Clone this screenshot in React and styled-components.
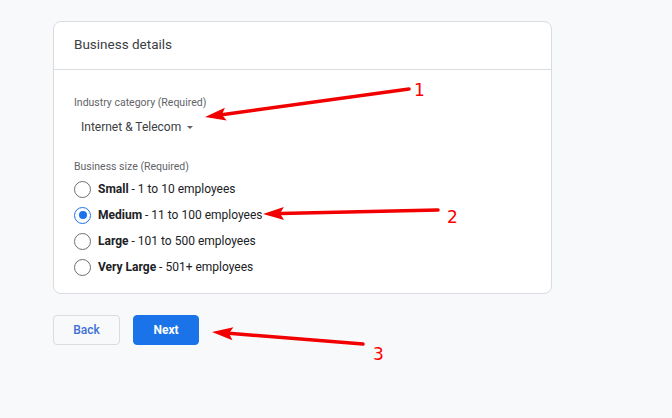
import React from 'react'
import styled, { createGlobalStyle } from 'styled-components'

const Global = createGlobalStyle`
  html, body {
    margin: 0;
    padding: 0;
    background: #f8f9fa;
    font-family: Roboto, "Liberation Sans", Arial, sans-serif;
    color: #202124;
  }
`

const Page = styled.div`
  position: relative;
  width: 672px;
  height: 418px;
  padding: 21px 0 0 53px;
  box-sizing: border-box;
`

const Card = styled.section`
  width: 499px;
  height: 273px;
  box-sizing: border-box;
  background: #fff;
  border: 1px solid #dadce0;
  border-radius: 8px;
`

const CardHeader = styled.header`
  height: 48px;
  box-sizing: border-box;
  display: flex;
  align-items: center;
  padding: 0 20px 4px;
  border-bottom: 1px solid #dadce0;
  font-size: 13.5px;
  color: #3c4043;
`

const CardBody = styled.div`
  padding: 26px 20px 0;
  display: flex;
  flex-direction: column;
`

const FieldLabel = styled.div`
  font-size: 10.5px;
  color: #5f6368;
  line-height: 14px;
  margin-top: ${(p) => p.$gap || 0}px;
`

const Select = styled.div`
  display: flex;
  align-items: center;
  gap: 6px;
  margin: 6px 0 0 7px;
  height: 22px;
  font-size: 12px;
  color: #3c4043;
`

const Caret = styled.span`
  width: 0;
  height: 0;
  border-left: 3.5px solid transparent;
  border-right: 3.5px solid transparent;
  border-top: 3.5px solid #5f6368;
  margin-top: 1px;
`

const RadioList = styled.div`
  display: flex;
  flex-direction: column;
  margin-top: 2px;
`

const Option = styled.label`
  display: flex;
  align-items: center;
  height: 26px;
  gap: 7px;
  font-size: 12px;
  color: #202124;
  b {
    font-weight: 700;
  }
`

const Circle = styled.span`
  width: 17px;
  height: 17px;
  box-sizing: border-box;
  border-radius: 50%;
  border: 1.5px solid ${(p) => (p.$on ? '#1a73e8' : '#6b6f73')};
  display: flex;
  align-items: center;
  justify-content: center;
  &::after {
    content: '';
    width: 8px;
    height: 8px;
    border-radius: 50%;
    background: ${(p) => (p.$on ? '#1a73e8' : 'transparent')};
  }
`

const Actions = styled.div`
  display: flex;
  gap: 13px;
  margin-top: 21px;
`

const Button = styled.button`
  height: 30px;
  width: ${(p) => p.$w}px;
  border-radius: 4px;
  font-family: inherit;
  font-size: 12px;
  font-weight: ${(p) => (p.$primary ? 700 : 500)};
  border: 1px solid ${(p) => (p.$primary ? '#1a73e8' : '#dadce0')};
  background: ${(p) => (p.$primary ? '#1a73e8' : '#f8f9fa')};
  color: ${(p) => (p.$primary ? '#fff' : '#3b6fd6')};
`

const Annotations = styled.svg`
  position: absolute;
  inset: 0;
  pointer-events: none;
`

const Num = styled.text`
  font-family: "DejaVu Sans", "Liberation Sans", sans-serif;
  font-size: 17px;
  fill: #f00;
`

const options = [
  ['Small', '1 to 10 employees'],
  ['Medium', '11 to 100 employees'],
  ['Large', '101 to 500 employees'],
  ['Very Large', '501+ employees'],
]

const Arrow = ({ x1, y1, x2, y2 }) => {
  const a = Math.atan2(y2 - y1, x2 - x1)
  const len = 21
  const w = 6.5
  const bx = x2 - len * Math.cos(a)
  const by = y2 - len * Math.sin(a)
  const nx = -Math.sin(a) * w
  const ny = Math.cos(a) * w
  const sx = x2 - (len - 4) * Math.cos(a)
  const sy = y2 - (len - 4) * Math.sin(a)
  return (
    <g fill="#f20000" stroke="#f20000">
      <line x1={x1} y1={y1} x2={sx} y2={sy} strokeWidth="3.5" strokeLinecap="round" />
      <polygon points={`${x2},${y2} ${bx + nx},${by + ny} ${sx},${sy} ${bx - nx},${by - ny}`} stroke="none" />
    </g>
  )
}

export default function App() {
  return (
    <>
      <Global />
      <Page>
        <Card>
          <CardHeader>Business details</CardHeader>
          <CardBody>
            <FieldLabel>Industry category (Required)</FieldLabel>
            <Select>
              Internet &amp; Telecom <Caret />
            </Select>
            <FieldLabel $gap={22}>Business size (Required)</FieldLabel>
            <RadioList>
              {options.map(([name, range], i) => (
                <Option key={name}>
                  <Circle $on={i === 1} />
                  <span>
                    <b>{name}</b> - {range}
                  </span>
                </Option>
              ))}
            </RadioList>
          </CardBody>
        </Card>
        <Actions>
          <Button $w={67}>Back</Button>
          <Button $w={66} $primary>
            Next
          </Button>
        </Actions>
        <Annotations width="672" height="418" viewBox="0 0 672 418">
          <Arrow x1={409} y1={89} x2={205} y2={117} />
          <Arrow x1={438} y1={210} x2={263} y2={214} />
          <Arrow x1={363} y1={344} x2={212} y2={332} />
          <Num x="414" y="96">1</Num>
          <Num x="447" y="223">2</Num>
          <Num x="373" y="360">3</Num>
        </Annotations>
      </Page>
    </>
  )
}
